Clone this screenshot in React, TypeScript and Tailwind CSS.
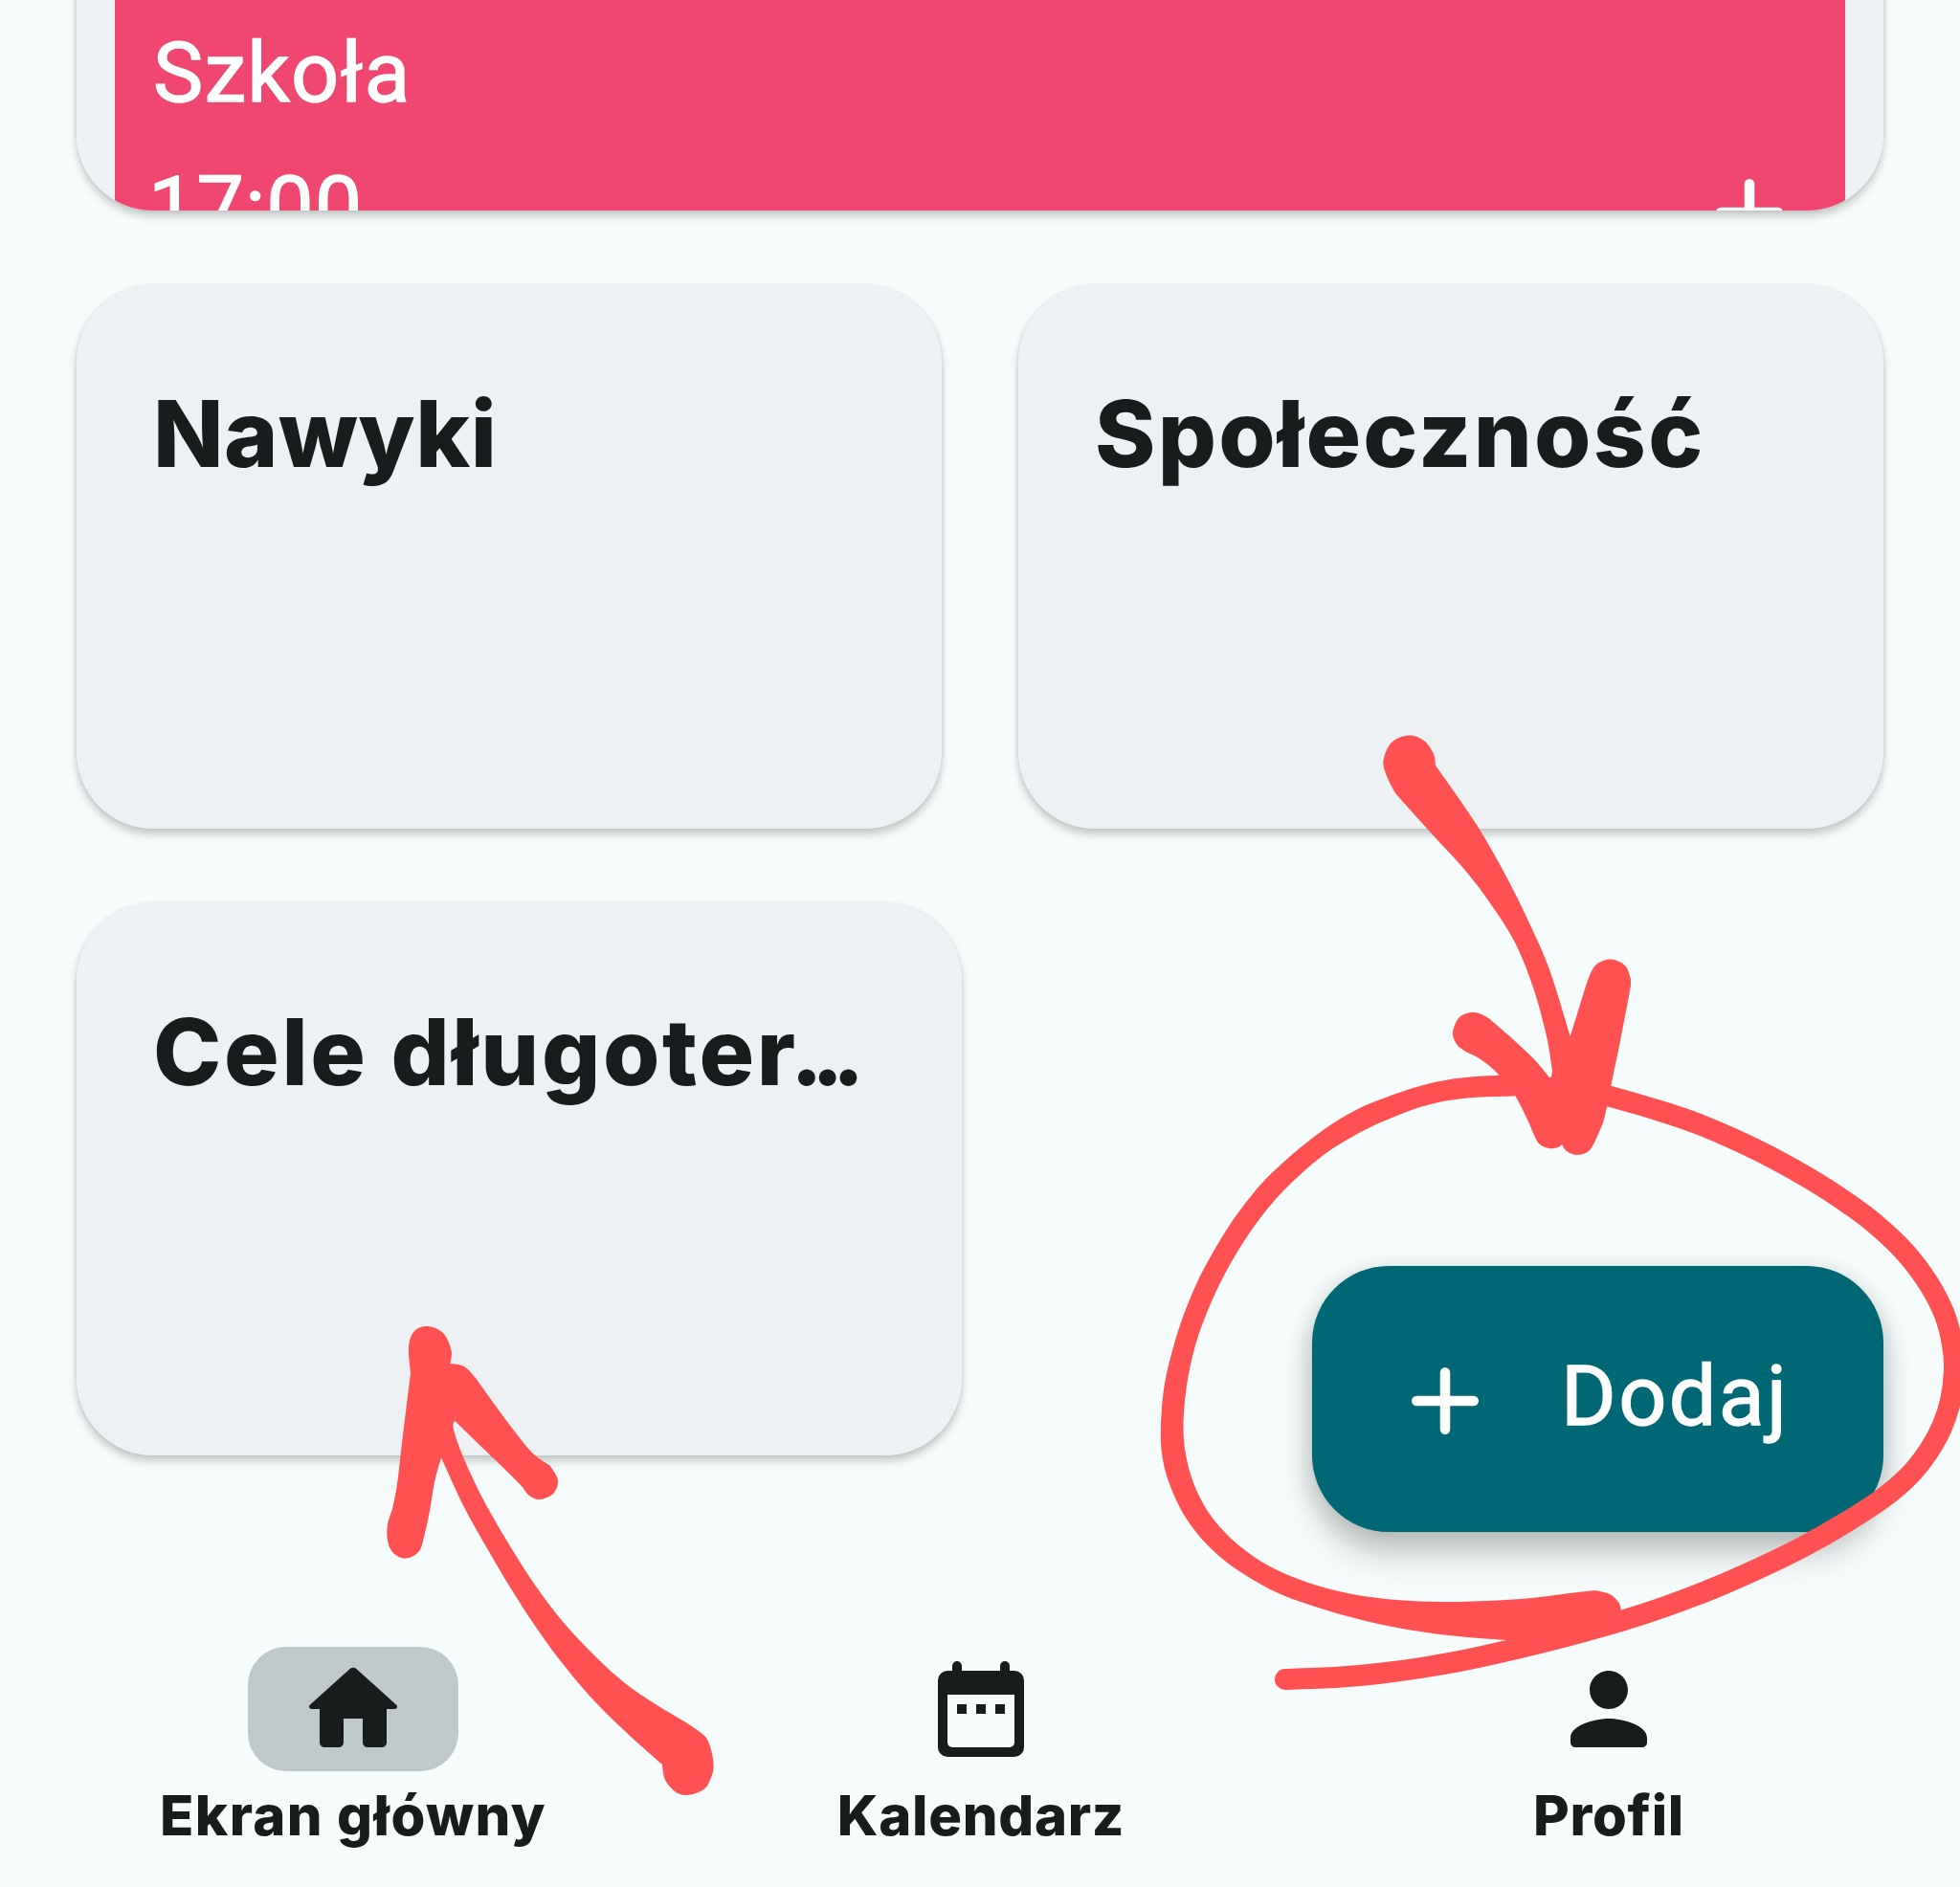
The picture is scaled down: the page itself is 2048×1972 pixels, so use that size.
import type { ReactNode } from "react";

type Point = [number, number];

// Catmull-Rom spline through a run of points, without the leading move command.
function curve(points: Point[]): string {
  let d = "";
  for (let i = 0; i < points.length - 1; i++) {
    const p0 = points[Math.max(i - 1, 0)];
    const p1 = points[i];
    const p2 = points[i + 1];
    const p3 = points[Math.min(i + 2, points.length - 1)];
    d += `C${p1[0] + (p2[0] - p0[0]) / 6} ${p1[1] + (p2[1] - p0[1]) / 6} ${p2[0] - (p3[0] - p1[0]) / 6} ${p2[1] - (p3[1] - p1[1]) / 6} ${p2[0]} ${p2[1]}`;
  }
  return d;
}

const line = (points: Point[]) => `M${points[0][0]} ${points[0][1]}` + curve(points);

// Closed outline made of smooth edges that meet in sharp corners.
const blob = (edges: Point[][]) =>
  `M${edges[0][0][0]} ${edges[0][0][1]}` +
  edges.map((e, i) => (i ? `L${e[0][0]} ${e[0][1]}` : "") + curve(e)).join("") +
  "Z";

const downShaft = blob([
  [[1500, 800], [1498, 788], [1488, 774], [1472, 768.5], [1454, 776], [1445.5, 795], [1449, 811], [1458, 829]],
  [[1458, 829], [1493, 868], [1533, 912], [1562, 951], [1584, 987], [1602, 1032], [1616, 1083], [1623, 1126]],
  [[1630, 1160], [1655, 1150]],
  [[1640.7, 1083], [1620, 1016], [1600, 969], [1575, 918], [1543, 862], [1500, 800]],
]);

const downRight = blob([
  [[1640.7, 1083], [1651, 1050], [1660, 1022], [1668, 1008], [1683, 1002.5], [1698, 1009], [1704, 1023]],
  [[1704, 1030], [1694, 1083], [1683, 1136], [1679, 1157]],
  [[1679, 1157], [1675, 1173], [1667, 1192]],
  [[1667, 1192], [1660, 1203], [1648, 1207], [1637, 1203], [1632, 1196]],
  [[1620, 1160], [1622, 1120], [1640.7, 1083]],
]);

const downLeft = blob([
  [[1619, 1126], [1603, 1107], [1583, 1088], [1567, 1074], [1553, 1062.5], [1539, 1058], [1525, 1063], [1518, 1079], [1522, 1091], [1530, 1098], [1547, 1107], [1565, 1122], [1583, 1145], [1596, 1170], [1602, 1184], [1608, 1195], [1618, 1200], [1628, 1199], [1633, 1195]],
  [[1650, 1160], [1640, 1120]],
]);

const ringLeft = blob([
  [[1600, 1124], [1563, 1124], [1527, 1126.5], [1493, 1132.5], [1457, 1143.6], [1413, 1162], [1373, 1188], [1333, 1222], [1310, 1246.4], [1287, 1277], [1267, 1309.5], [1250, 1342], [1234, 1382], [1222.7, 1420], [1216, 1452], [1213, 1489.6], [1214, 1519], [1221, 1548], [1237, 1583], [1262, 1615], [1295, 1642], [1337, 1665.5], [1387, 1683], [1440, 1697], [1487, 1705.5], [1533, 1711], [1581, 1714.5]],
  [[1660, 1715], [1694, 1700]],
  [[1694.5, 1686], [1691.5, 1675], [1682, 1666], [1667, 1662]],
  [[1667, 1662], [1640, 1665], [1600, 1670], [1553, 1673], [1507, 1674], [1460, 1672], [1413, 1666], [1367, 1654], [1325, 1636], [1292, 1613], [1267, 1586.5], [1250, 1557], [1240, 1525], [1236.5, 1491.6], [1240, 1448], [1249, 1406], [1263, 1367], [1280, 1331], [1300, 1297], [1323, 1265], [1348, 1237.5], [1383, 1207], [1420, 1184], [1457, 1167], [1493, 1154.5], [1533, 1147.6], [1582, 1145.6]],
]);

const ringRight: Point[] = [
  [1672, 1143.5], [1683, 1146], [1733, 1160.5], [1773, 1174], [1813, 1191], [1853, 1210.5], [1893, 1233], [1925, 1253.5], [1957, 1277], [1990, 1308], [2015, 1341], [2032, 1374], [2040, 1405], [2042, 1432], [2038, 1464], [2029, 1491.5], [2015, 1517], [1995, 1542], [1967, 1566], [1927, 1592], [1883, 1617], [1840, 1638], [1790, 1660], [1740, 1679], [1694, 1694], [1640, 1709], [1584, 1723], [1530, 1735], [1484.5, 1743], [1440, 1749], [1401, 1752.5], [1343, 1755],
];

const upArrow = blob([
  [[470.5, 1425], [471.5, 1411], [463, 1393], [447, 1386], [433, 1391], [427, 1408], [429, 1435]],
  [[429, 1435], [425, 1467], [420, 1508], [415, 1551], [410, 1577]],
  [[410, 1577], [405, 1593], [405, 1610], [411, 1623], [424, 1628.6], [438, 1621], [444, 1602], [449, 1579], [454, 1549], [461, 1523]],
  [[461, 1523], [485, 1575], [513, 1625], [535, 1662], [557, 1696], [585, 1735], [620, 1776.5], [655, 1811], [692, 1844]],
  [[692, 1846], [695, 1860], [705, 1872], [718, 1876], [736, 1869.5], [744, 1855], [745.5, 1843], [742, 1825], [735, 1813], [715, 1799]],
  [[715, 1799], [685, 1781], [653, 1759], [621, 1730], [590, 1697], [563, 1662], [538, 1624], [507, 1571], [485, 1525], [474, 1494], [475, 1484.6]],
  [[475, 1484.6], [499, 1508], [525, 1533], [546, 1554]],
  [[546, 1554], [553, 1563], [564, 1567], [578, 1561], [583, 1547], [575, 1532]],
  [[575, 1532], [556, 1518], [537, 1495], [517, 1468], [497, 1440]],
  [[497, 1440], [485, 1428], [470.5, 1425]],
]);

function Plus({ className }: { className: string }) {
  return (
    <svg viewBox="0 0 70 70" className={className} stroke="currentColor" strokeWidth="10.5" strokeLinecap="round" fill="none">
      <path d="M35 5.25V64.75M5.25 35H64.75" />
    </svg>
  );
}

function Icon({ children }: { children: ReactNode }) {
  return (
    <svg viewBox="0 0 24 24" className="size-[120px]" fill="currentColor">
      {children}
    </svg>
  );
}

function Card({ children, className }: { children: ReactNode; className: string }) {
  return (
    <section
      className={
        "rounded-[80px] bg-[#edf1f4] pt-[107px] pl-20 shadow-[0_6px_10px_rgba(0,0,0,0.2),0_0_4px_rgba(0,0,0,0.08)] " + className
      }
    >
      <h2 className="font-['Inter',sans-serif] text-[96px] leading-[96px] font-extrabold whitespace-nowrap">{children}</h2>
    </section>
  );
}

function NavItem({ label, active, tracking, children }: { label: string; active?: boolean; tracking: string; children: ReactNode }) {
  return (
    <a className="flex w-[656px] shrink-0 flex-col items-center">
      <span className={"flex h-[130px] w-[220px] items-center justify-center rounded-[40px] " + (active ? "bg-[#bfc8ca]" : "")}>
        {children}
      </span>
      <span className={"mt-[17px] font-['Inter',sans-serif] text-[58px] leading-[58px] font-extrabold whitespace-nowrap " + tracking}>
        {label}
      </span>
    </a>
  );
}

export default function App() {
  return (
    <div className="relative flex h-[1972px] w-[2048px] flex-col overflow-hidden bg-[#f6fcfb] text-[#191c1d]">
      <main className="flex h-[1721px] flex-col px-20">
        <section className="-mt-24 h-[316px] shrink-0 rounded-[80px] shadow-[0_6px_10px_rgba(0,0,0,0.2),0_0_4px_rgba(0,0,0,0.08)]">
          <div className="h-full overflow-hidden rounded-[80px] bg-[#edf1f4] px-10 pt-24">
            <div className="h-[320px] bg-[#f04770] px-10 pt-8 font-['Roboto',sans-serif] text-[88px] leading-[88px] text-white [-webkit-text-stroke:1.4px_white]">
              <p className="tracking-[1.2px]">Szkoła</p>
              <div className="mt-[52px] flex justify-between pr-[25px]">
                <p className="-ml-[5px] tracking-[1px]">17:00</p>
                <Plus className="mt-[15px] size-[70px]" />
              </div>
            </div>
          </div>
        </section>
        <div className="mt-[78px] flex gap-20">
          <Card className="h-[568px] w-[904px] tracking-[0.5px]">Nawyki</Card>
          <Card className="h-[568px] w-[904px] tracking-[2.3px]">Społeczność</Card>
        </div>
        <Card className="mt-[78px] h-[577px] w-[925px] tracking-[2.7px]">
          Cele długoter<span className="-ml-[8px] tracking-[-12px]">...</span>
        </Card>
      </main>

      <nav className="flex h-[251px] justify-center pl-[2px]">
        <NavItem label="Ekran główny" tracking="tracking-[1.4px]" active>
          <Icon>
            <path d="M10 19v-5h4v5c0 .55.45 1 1 1h3c.55 0 1-.45 1-1v-7h1.700c.46 0 .68-.57.33-.87L12.670 3.600c-.38-.34-.96-.34-1.340 0l-8.360 7.530c-.34.3-.13.870.33.870H5v7c0 .55.45 1 1 1h3c.55 0 1-.45 1-1z" />
          </Icon>
        </NavItem>
        <NavItem label="Kalendarz" tracking="tracking-[0.7px]">
          <Icon>
            <path
              fillRule="evenodd"
              d="M7 2a1 1 0 0 1 1 1v1h8V3a1 1 0 0 1 2 0v1h1a2 2 0 0 1 2 2v14a2 2 0 0 1-2 2H5a2 2 0 0 1-2-2V6a2 2 0 0 1 2-2h1V3a1 1 0 0 1 1-1zM5 9v10a1 1 0 0 0 1 1h12a1 1 0 0 0 1-1V9zM7 11h2v2H7zM11 11h2v2h-2zM15 11h2v2h-2z"
            />
          </Icon>
        </NavItem>
        <NavItem label="Profil" tracking="tracking-[0.7px]">
          <Icon>
            <path d="M12 12c2.210 0 4-1.790 4-4s-1.790-4-4-4-4 1.790-4 4 1.790 4 4 4zm0 2c-2.670 0-8 1.340-8 4v1c0 .55.45 1 1 1h14c.55 0 1-.45 1-1v-1c0-2.660-5.330-4-8-4z" />
          </Icon>
        </NavItem>
      </nav>

      <button className="absolute top-[1323px] right-20 flex h-[278px] w-[597px] items-center rounded-[80px] bg-[#006874] pl-[104px] text-white shadow-[0_24px_36px_rgba(0,0,0,0.2),0_4px_26px_rgba(0,0,0,0.14)]">
        <Plus className="mt-[4px] size-[70px]" />
        <span className="-mt-[7px] ml-[86px] font-['Roboto',sans-serif] text-[88px] leading-[88px] tracking-[2.4px] [-webkit-text-stroke:1.4px_white]">
          Dodaj
        </span>
      </button>

      <svg viewBox="0 0 2048 1972" className="pointer-events-none absolute inset-0 size-full" fill="#ff5151">
        <path d={downShaft} />
        <path d={downRight} />
        <path d={downLeft} />
        <path d={ringLeft} />
        <path d={upArrow} />
        <path d={line(ringRight)} fill="none" stroke="#ff5151" strokeWidth="22" strokeLinecap="round" />
      </svg>
    </div>
  );
}
